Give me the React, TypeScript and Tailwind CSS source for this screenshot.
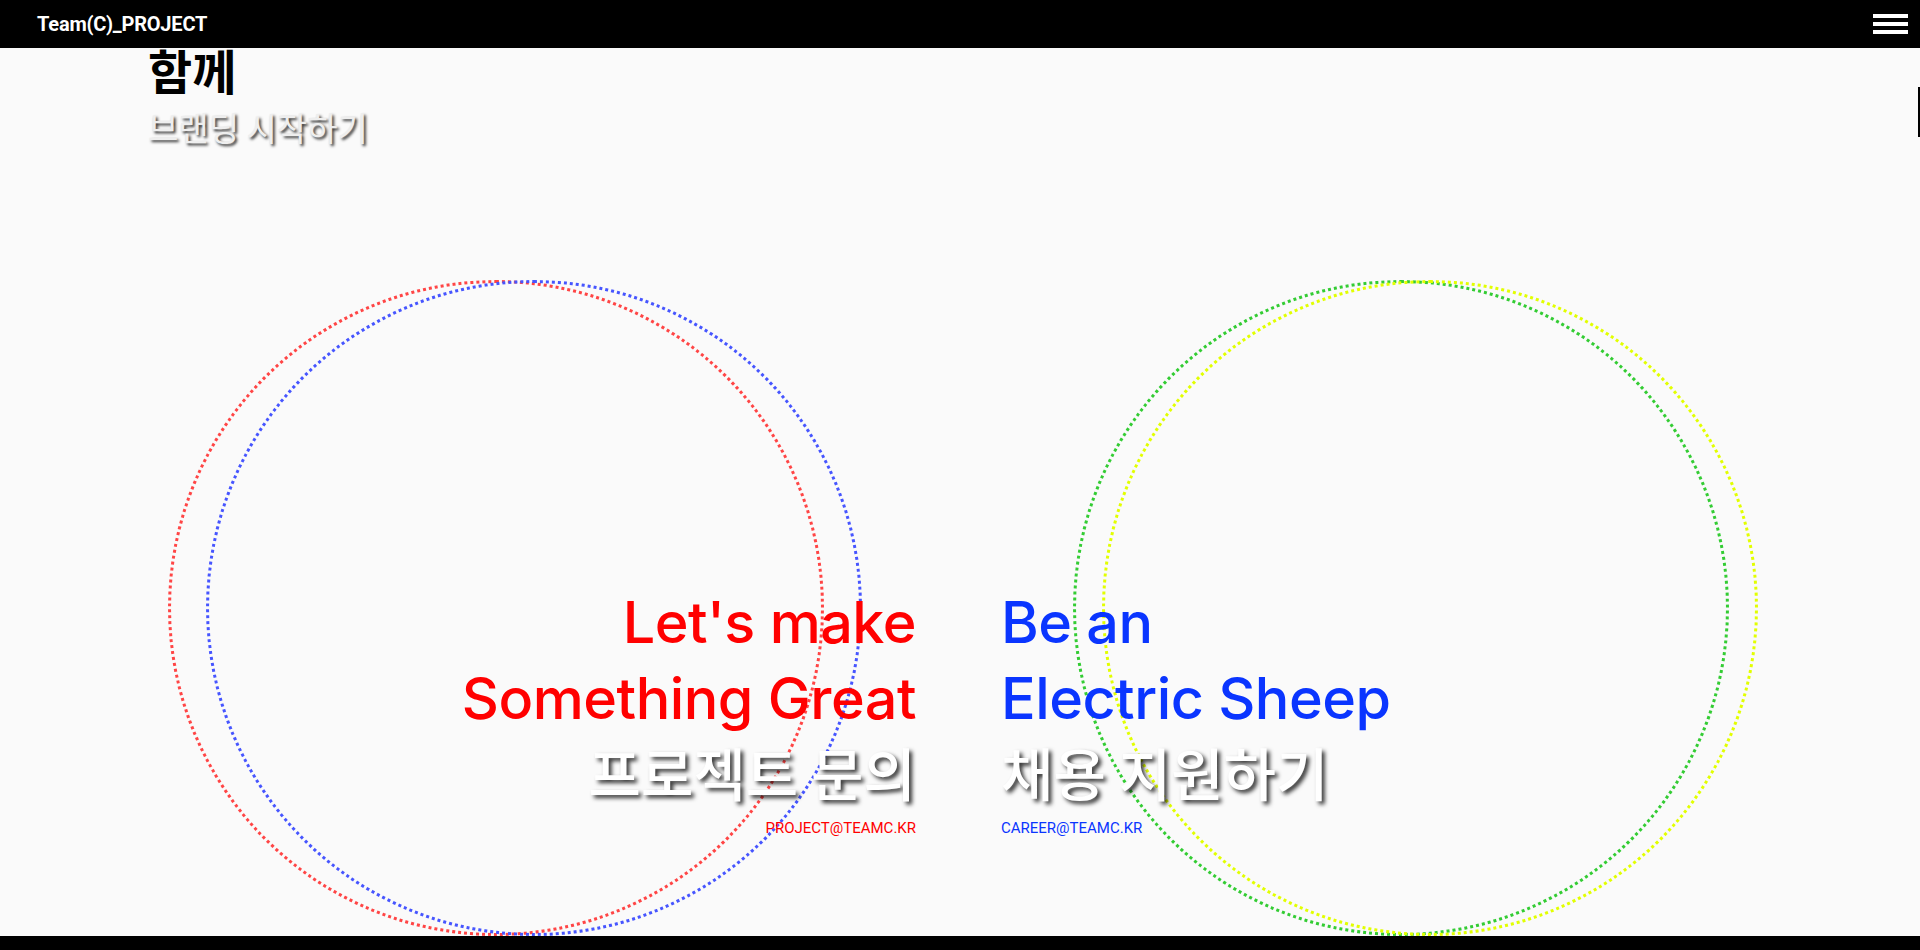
const sans = "font-['Inter','Noto_Sans_CJK_KR',sans-serif]";
const kr = "font-['Noto_Sans_CJK_KR','Noto_Sans',sans-serif]";

export default function App() {
  return (
    <div className="relative h-[950px] w-full overflow-hidden bg-[#fafafa]">
      {/* Header */}
      <header className="fixed top-0 left-0 z-20 flex h-12 w-full items-center justify-between bg-black pl-[37px] pr-[12px]">
        <span className="font-['Roboto',sans-serif] text-[20px] font-bold tracking-[-0.2px] text-white">
          Team(C)_PROJECT
        </span>
        <div className="flex w-[35px] flex-col gap-[4px]">
          <span className="h-[4px] w-full bg-white" />
          <span className="h-[4px] w-full bg-white" />
          <span className="h-[4px] w-full bg-white" />
        </div>
      </header>

      {/* side scroll marker */}
      <div className="absolute right-0 top-[87px] z-20 h-[50px] w-[2px] bg-black" />

      {/* Intro */}
      <section className={`${kr} pl-[148px] pt-[38px]`}>
        <h1 className="text-[48px] font-bold leading-[62px] text-black">함께</h1>
        <p className="mt-[5px] text-[33px] leading-[44px] text-[#eeeeee] [text-shadow:2px_2px_3px_rgba(0,0,0,0.85)]">
          브랜딩 시작하기
        </p>
      </section>

      {/* Contact */}
      <section className="mt-[131px] grid h-[656px] grid-cols-2 gap-[88px]">
        {/* project */}
        <div className="relative">
          <div className="absolute left-[168px] top-0 h-[656px] w-[656px] rounded-full border-[3px] border-dotted border-[#ff4545]" />
          <div className="absolute left-[206px] top-0 h-[656px] w-[656px] rounded-full border-[3px] border-dotted border-[#4655ff]" />
          <div className="relative flex flex-col items-end pt-[304px] text-right">
            <h2 className={`${sans} text-[57.5px] font-medium leading-[76px] tracking-[-0.5px] text-[#ff0000]`}>
              Let's make
              <br />
              Something Great
            </h2>
            <p className={`${kr} text-[57px] font-medium leading-[70px] text-white [text-shadow:3px_3px_4px_rgba(0,0,0,0.8)]`}>
              프로젝트 문의
            </p>
            <a className="mt-[12px] font-['Roboto',sans-serif] text-[15px] leading-[20px] text-[#ff0000]">
              PROJECT@TEAMC.KR
            </a>
          </div>
        </div>

        {/* career */}
        <div className="relative">
          <div className="absolute left-[69px] top-0 h-[656px] w-[656px] rounded-full border-[3px] border-dotted border-[#33cc33]" />
          <div className="absolute left-[98px] top-0 h-[656px] w-[656px] rounded-full border-[3px] border-dotted border-[#e2ff00]" />
          <div className="relative -ml-[3px] flex flex-col items-start pt-[304px] text-left">
            <h2 className={`${sans} text-[57.5px] font-medium leading-[76px] tracking-[-0.5px] text-[#0a35ff]`}>
              Be an
              <br />
              Electric Sheep
            </h2>
            <p className={`${kr} text-[57px] font-medium leading-[70px] text-white [text-shadow:3px_3px_4px_rgba(0,0,0,0.8)]`}>
              채용 지원하기
            </p>
            <a className="mt-[12px] font-['Roboto',sans-serif] text-[15px] leading-[20px] text-[#0a35ff]">
              CAREER@TEAMC.KR
            </a>
          </div>
        </div>
      </section>

      {/* bottom bar */}
      <footer className="fixed bottom-0 left-0 z-20 h-[14px] w-full bg-black" />
    </div>
  );
}
